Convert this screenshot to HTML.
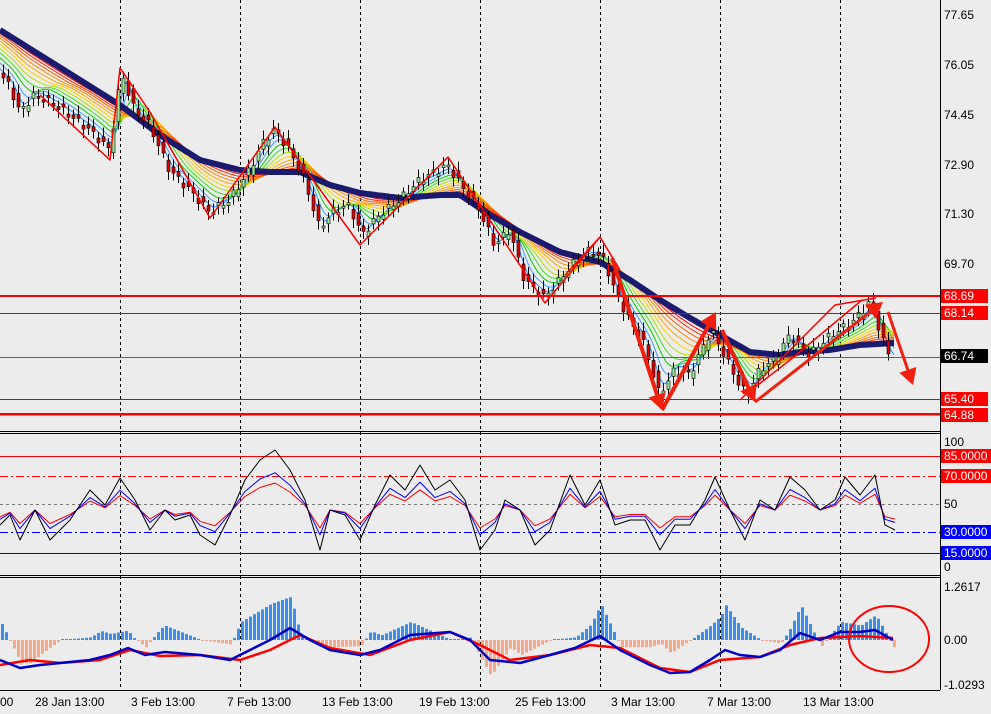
<!DOCTYPE html>
<html><head><meta charset="utf-8"><style>
html,body{margin:0;padding:0;background:#ececec;}
#w{position:relative;width:991px;height:714px;overflow:hidden;background:#ececec;font-family:"Liberation Sans","DejaVu Sans",sans-serif;font-size:12px;}
.l{position:absolute;left:944px;line-height:14px;color:#000;}
.b{position:absolute;left:941px;width:44px;height:14px;line-height:14px;padding-left:3px;color:#fff;background:#f00;}
.t{position:absolute;top:695px;line-height:14px;color:#000;}
</style></head><body><div id="w">
<svg id="s" width="991" height="714" style="position:absolute;left:0;top:0"></svg>
<div class="l" style="top:8px">77.65</div>
<div class="l" style="top:58px">76.05</div>
<div class="l" style="top:108px">74.45</div>
<div class="l" style="top:158px">72.90</div>
<div class="l" style="top:207px">71.30</div>
<div class="l" style="top:257px">69.70</div>
<div class="b" style="top:289px">68.69</div>
<div class="b" style="top:306px">68.14</div>
<div class="b" style="top:349px;background:#000">66.74</div>
<div class="b" style="top:392px">65.40</div>
<div class="b" style="top:408px">64.88</div>
<div class="l" style="top:435px">100</div>
<div class="b" style="top:449px;width:48px;overflow:hidden">85.0000</div>
<div class="b" style="top:469px;width:48px;overflow:hidden">70.0000</div>
<div class="l" style="top:497px">50</div>
<div class="b" style="top:525px;width:48px;overflow:hidden;background:#00f">30.0000</div>
<div class="b" style="top:546px;width:48px;overflow:hidden;background:#00f">15.0000</div>
<div class="l" style="top:560px">0</div>
<div class="l" style="top:580px">1.2617</div>
<div class="l" style="top:633px">0.00</div>
<div class="l" style="top:678px">-1.0293</div>
<div class="t" style="left:0">00</div>
<div class="t" style="left:35px">28 Jan 13:00</div>
<div class="t" style="left:131px">3 Feb 13:00</div>
<div class="t" style="left:227px">7 Feb 13:00</div>
<div class="t" style="left:322px">13 Feb 13:00</div>
<div class="t" style="left:419px">19 Feb 13:00</div>
<div class="t" style="left:515px">25 Feb 13:00</div>
<div class="t" style="left:611px">3 Mar 13:00</div>
<div class="t" style="left:707px">7 Mar 13:00</div>
<div class="t" style="left:803px">13 Mar 13:00</div>
</div>
<script>
var S=document.getElementById('s'),o='';
function L(x1,y1,x2,y2,c,w,d){o+='<line x1="'+x1+'" y1="'+y1+'" x2="'+x2+'" y2="'+y2+'" stroke="'+c+'" stroke-width="'+(w||1)+'"'+(d?' stroke-dasharray="'+d+'"':'')+' shape-rendering="'+(x1==x2||y1==y2?'crispEdges':'auto')+'"/>';}
function interp(a,x){for(var i=0;i<a.length-1;i++){if(x<=a[i+1][0]){var t=(x-a[i][0])/(a[i+1][0]-a[i][0]);return a[i][1]+t*(a[i+1][1]-a[i][1]);}}return a[a.length-1][1];}
function PL(a,c,w){var p=a.map(function(q){return q[0]+','+q[1].toFixed(1)}).join(' ');o+='<polyline points="'+p+'" fill="none" stroke="'+c+'" stroke-width="'+w+'" stroke-linejoin="round"/>';}
function samp(a,x0,x1,st){var r=[];for(var x=x0;x<=x1;x+=st)r.push([x,interp(a,x)]);return r;}
[120,240,360,480,600,720,840].forEach(function(x){L(x+.5,0,x+.5,690,'#000',1,'3,3');});
L(940.5,0,940.5,690,'#000');
L(0,431.5,940,431.5,'#000');L(0,433.5,940,433.5,'#000');
L(0,575.5,940,575.5,'#000');L(0,577.5,940,577.5,'#000');
L(0,690.5,940,690.5,'#000');
var P=[[0,75],[10,85],[20,112],[35,95],[50,102],[70,115],[90,130],[110,150],[118,100],[122,72],[135,110],[150,125],[170,170],[190,190],[210,212],[230,200],[250,170],[265,140],[275,130],[290,150],[305,180],[320,228],[335,210],[350,205],[362,235],[380,215],[400,200],[420,180],[448,165],[465,190],[480,210],[495,245],[510,230],[525,280],[545,298],[560,280],[575,262],[590,250],[605,260],[615,290],[630,320],[645,345],[660,395],[675,370],[690,375],[712,330],[725,355],[740,385],[748,395],[760,370],[775,360],[790,335],[800,345],[810,355],[825,340],[840,330],[855,320],[872,300],[880,330],[890,357]];
var MA=[[0,30],[40,55],[80,80],[120,105],[160,135],[200,160],[240,170],[270,172],[300,172],[330,185],[360,193],[400,198],[440,195],[460,195],[490,215],[520,232],[560,252],[600,262],[630,280],[660,300],[690,318],[720,335],[750,352],[780,355],[800,352],[830,350],[860,345],[895,343]];
var cols=['#1e90ff','#3fa0ff','#00d000','#40e020','#b0e000','#ffd000','#ffa500','#ff8c00','#ff6000','#ff3000','#ff0000','#e00000'];
function sm(a,x,wd){var s=0,n=0;for(var d=-wd;d<=0;d+=2){s+=interp(a,x+d);n++;}return s/n;}
for(var k=0;k<12;k++){var f=(k+1)/13;var r=[];for(var x=0;x<=895;x+=3){r.push([x,sm(P,x,(k+1)*6)*(1-f)+interp(MA,x)*f]);}PL(r,cols[k],1);}
PL(samp(MA,0,895,3),'#1a1a6e',6);
for(var x=2;x<=890;x+=5){var a=interp(P,x-3),b=interp(P,x+2);var n=Math.sin(x*1.7)*4;var y1=Math.min(a,b)+n,y2=Math.max(a,b)+n;if(y2-y1<2)y2=y1+2;var up=b<a;L(x+1.5,y1-4-Math.abs(Math.sin(x))*5,x+1.5,y2+4+Math.abs(Math.cos(x))*5,'#000',1);o+='<rect x="'+x+'" y="'+y1.toFixed(1)+'" width="3" height="'+(y2-y1).toFixed(1)+'" fill="'+(up?'#98e898':'#e00000')+'" stroke="#000" stroke-width="0.6"/>';}
L(0,296,940,296,'#f00',2);L(0,313.5,940,313.5,'#d00',1);L(0,357.5,940,357.5,'#4060c0',1);L(0,399.5,940,399.5,'#d00',1);L(0,414,940,414,'#f00',2.5);
PL([[40,95],[110,160],[120,68],[150,112],[210,218],[275,127],[360,245],[448,157],[545,303],[600,237],[620,270]],'#f00',1.5);
PL([[565,275],[600,237]],'#f00',1.5);PL([[740,400],[835,305],[876,298]],'#f00',1.5);PL([[745,395],[790,360],[862,300]],'#f00',1.5);
function AR(x1,y1,x2,y2,w){var dx=x2-x1,dy=y2-y1,l=Math.sqrt(dx*dx+dy*dy),ux=dx/l,uy=dy/l,h=16,hw=9;var bx=x2-ux*h,by=y2-uy*h;L(x1,y1,bx,by,'#f02010',w);o+='<polygon points="'+x2+','+y2+' '+(bx-uy*hw)+','+(by+ux*hw)+' '+(bx+uy*hw)+','+(by-ux*hw)+'" fill="#f02010"/>';}
AR(612,258,662,410,4);AR(662,410,716,312,4);AR(722,330,755,402,4);AR(755,402,883,302,3);AR(888,312,913,385,3);
L(0,456.5,940,456.5,'#f00',1);L(0,476.5,940,476.5,'#f00',1,'8,3,2,3');L(0,504.5,940,504.5,'#777',1,'3,3');L(0,532.5,940,532.5,'#00f',1,'8,3,2,3');L(0,553.5,940,553.5,'#00f',1);
var K=[[0,525],[10,515],[20,540],[35,510],[50,540],[70,520],[90,490],[105,505],[120,478],[135,500],[150,530],[165,510],[175,520],[190,515],[200,535],[215,545],[230,515],[245,480],[260,460],[275,450],[290,470],[305,500],[320,550],[330,510],[345,515],[360,540],[375,505],[390,475],[405,490],[420,465],[435,490],[450,480],[465,500],[480,550],[495,530],[505,500],[520,510],[535,545],[550,530],[570,475],[585,505],[600,480],[615,525],[630,520],[645,520],[660,550],[675,525],[690,525],[705,500],[715,477],[730,510],[745,540],[760,500],[775,510],[790,477],[805,490],[820,510],[835,500],[845,477],[860,495],[875,475],[885,525],[895,530]];
PL(K.map(function(q){return[q[0],510+(q[1]-510)*0.45]}),'#f00',1);
PL(K.map(function(q){return[q[0],510+(q[1]-510)*0.62]}),'#00f',1);
PL(K,'#000',1);
var B=[[0,660],[20,668],[40,665],[60,663],[90,660],[110,655],[128,648],[145,655],[165,652],[200,655],[230,660],[250,650],[270,640],[290,628],[310,640],[330,650],[360,655],[380,650],[410,635],[450,632],[470,640],[490,660],[520,663],[550,655],[575,648],[600,636],[620,650],[650,665],[670,673],[690,672],[710,660],[725,650],[740,655],[760,657],[780,650],[800,633],[820,640],[840,632],[860,632],[875,630],[893,640]];
var R=[[0,665],[30,660],[60,663],[100,660],[130,650],[160,656],[200,655],[240,660],[270,650],[300,635],[330,648],[370,655],[410,640],[450,632],[480,645],[510,660],[550,655],[590,645],[620,648],[660,668],[690,672],[720,660],[760,657],[790,645],[820,638],[860,636],[893,638]];
for(var x=1;x<=893;x+=4){var h=(interp(R,x)-interp(B,x))*3.6;if(Math.abs(h)<1)h=h<0?-1:1;var y=h>0?640-h:640;o+='<rect x="'+x+'" y="'+y.toFixed(1)+'" width="3" height="'+Math.abs(h).toFixed(1)+'" fill="'+(h>0?'#3b8fe8':'#f5a88a')+'"/>';}
PL(R,'#f00',2.5);PL(B,'#0000c8',2.5);
o+='<ellipse cx="889" cy="639" rx="40" ry="33" fill="none" stroke="#f00" stroke-width="2"/>';
S.innerHTML=o;
</script>
</body></html>
